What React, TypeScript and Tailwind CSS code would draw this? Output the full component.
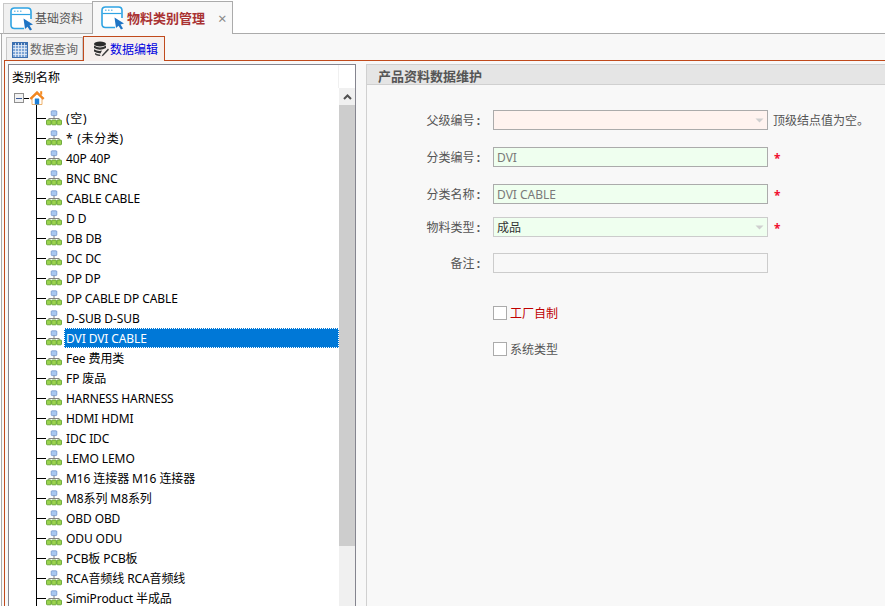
import React from "react";

const FONT = "font-['Noto_Sans','Noto_Sans_CJK_SC',sans-serif]";

function WindowIcon() {
  return (
    <svg width="24" height="24" viewBox="0 0 24 24" className="shrink-0">
      <path d="M14 21.5H4.5Q1 21.5 1 18V4.5Q1 1 4.5 1H17.5Q21 1 21 4.5V12" fill="#fff" stroke="#2ea3e3" strokeWidth="1.6" />
      <path d="M1.5 7.5H20.5" stroke="#2ea3e3" strokeWidth="1.2" />
      <path d="M4 4.2H5.5M7 4.2H8.5M10 4.2H11.5" stroke="#7cc3ea" strokeWidth="1.4" />
      <path d="M13.5 11.5L23 17.5L19.5 18.5L22 22.5L20 23.5L17.5 19.8L15 22Z" fill="#1f74c4" />
    </svg>
  );
}

function GridIcon() {
  return (
    <svg width="16" height="16" viewBox="0 0 16 16" className="shrink-0">
      <rect x="0.5" y="0.5" width="15" height="15" fill="#7fa6d6" />
      <rect x="0.5" y="0.5" width="15" height="3" fill="#3b6fb0" />
      <path d="M0.5 3.5H15.5M0.5 6.5H15.5M0.5 9.5H15.5M0.5 12.5H15.5M3.5 0.5V15.5M6.5 0.5V15.5M9.5 0.5V15.5M12.5 0.5V15.5" stroke="#e8eff8" strokeWidth="0.8" />
      <rect x="0.5" y="0.5" width="15" height="15" fill="none" stroke="#3b6fb0" />
    </svg>
  );
}

function DbIcon() {
  return (
    <svg width="16" height="16" viewBox="0 0 16 16" className="shrink-0">
      <ellipse cx="7" cy="3" rx="6" ry="2.6" fill="#2b2b2b" />
      <path d="M1 4.6Q7 8.4 13 4.6V7Q7 10.6 1 7Z" fill="#333" />
      <path d="M1 8.2Q5 10.6 9 9.6L7.5 12.4Q3.5 12.4 1 10.6Z" fill="#333" />
      <path d="M2 12Q4.5 13.6 7 13.4L7.5 15Q3.5 15.4 2 13.6Z" fill="#444" />
      <path d="M15 7.5L9.5 13.5L8.5 15.5L10.5 14.6L16 8.8Z" fill="#3a3a3a" />
    </svg>
  );
}

function HomeIcon() {
  return (
    <svg width="16" height="16" viewBox="0 0 16 16" className="shrink-0">
      <path d="M3 8V14.5H13V8L8 3.5Z" fill="#fff" stroke="#e9a04a" strokeWidth="0.8" />
      <path d="M0.8 8.2L8 1.2L15.2 8.2L13.8 9.4L8 3.9L2.2 9.4Z" fill="#f58a1f" stroke="#e06c10" strokeWidth="0.5" />
      <rect x="11.2" y="1.2" width="2" height="3.5" fill="#f58a1f" />
      <rect x="5.8" y="8.5" width="4.4" height="6" rx="0.6" fill="#1d7fd6" />
    </svg>
  );
}

function NodeIcon() {
  return (
    <svg width="16" height="16" viewBox="0 0 16 16" className="shrink-0">
      <rect x="5.2" y="0.8" width="5.6" height="4.8" rx="0.8" fill="#a9c8f0" stroke="#6c8fc9" strokeWidth="0.7" />
      <path d="M8 5.6V9M2.8 10V8.5H13.2V10" fill="none" stroke="#777" strokeWidth="0.9" />
      <rect x="0.5" y="10" width="4.6" height="4.8" rx="0.8" fill="#9bd34f" stroke="#5a9a26" strokeWidth="0.8" />
      <rect x="5.7" y="10" width="4.6" height="4.8" rx="0.8" fill="#9bd34f" stroke="#5a9a26" strokeWidth="0.8" />
      <rect x="10.9" y="10" width="4.6" height="4.8" rx="0.8" fill="#9bd34f" stroke="#5a9a26" strokeWidth="0.8" />
    </svg>
  );
}

const ROWS = [
  "(空)",
  "* (未分类)",
  "40P 40P",
  "BNC BNC",
  "CABLE CABLE",
  "D D",
  "DB DB",
  "DC DC",
  "DP DP",
  "DP CABLE DP CABLE",
  "D-SUB D-SUB",
  "DVI DVI CABLE",
  "Fee 费用类",
  "FP 废品",
  "HARNESS HARNESS",
  "HDMI HDMI",
  "IDC IDC",
  "LEMO LEMO",
  "M16 连接器 M16 连接器",
  "M8系列 M8系列",
  "OBD OBD",
  "ODU ODU",
  "PCB板 PCB板",
  "RCA音频线 RCA音频线",
  "SimiProduct 半成品",
];

function TreeRow({ text }: { text: string }) {
  const selected = text === "DVI DVI CABLE";
  const wide = text.startsWith("(") || text.startsWith("*");
  return (
    <div className="flex h-5 items-center">
      <div className="h-px w-[9px] shrink-0 bg-black" />
      <NodeIcon />
      <div
        className={
          selected
            ? "ml-[2px] flex h-5 flex-1 items-center border border-dotted border-white bg-[#0078d7] pl-[1px] pt-px tracking-[-0.1px] text-white"
            : wide
              ? "ml-[2px] flex h-5 flex-1 items-center pl-[2px] pt-px tracking-[0.7px] text-black"
              : "ml-[2px] flex h-5 flex-1 items-center pl-[2px] pt-px tracking-[-0.1px] text-black"
        }
      >
        {text}
      </div>
    </div>
  );
}

function Arrow() {
  return (
    <svg width="9" height="5" viewBox="0 0 9 5" className="mr-[3px] shrink-0">
      <path d="M0.5 0.5H8.5L4.5 4.5Z" fill="#cfcfcf" />
    </svg>
  );
}

function FormRow({
  label,
  box,
  value,
  combo,
  star,
  note,
  mt,
}: {
  label: string;
  box: string;
  value?: string;
  combo?: boolean;
  star?: boolean;
  note?: string;
  mt: string;
}) {
  return (
    <div className={`flex h-5 items-center ${mt}`}>
      <div className="w-[113px] shrink-0 pt-[2px] text-right text-[#555]">
        {label}
        <span className="ml-[2px] font-bold">:</span>
      </div>
      <div className={`ml-[13px] flex h-5 w-[275px] shrink-0 items-center justify-between border pl-[3px] ${box}`}>
        <span className="pt-px">{value}</span>
        {combo && <Arrow />}
      </div>
      {star && <span className="ml-[6px] pt-[3px] font-bold leading-[12px] text-[#f01030]">*</span>}
      {note && <span className="ml-[5px] pt-[2px] text-[#555]">{note}</span>}
    </div>
  );
}

function Check({ label, color, mt }: { label: string; color: string; mt: string }) {
  return (
    <div className={`ml-[126px] flex h-[14px] items-center ${mt}`}>
      <div className="h-[14px] w-[14px] shrink-0 border border-[#ababab] bg-white" />
      <span className={`ml-[3px] pt-px ${color}`}>{label}</span>
    </div>
  );
}

export default function App() {
  return (
    <div className={`flex h-[606px] w-[885px] flex-col overflow-hidden bg-white text-[12px] leading-[16px] ${FONT}`}>
      {/* main tabs */}
      <div className="relative z-10 flex h-[34px] shrink-0 items-end border-b border-[#ababab] pl-[3px]">
        <div className="-mb-px flex h-[31px] w-[89px] items-center border border-r-0 border-[#c8c8c8] border-b-[#ababab] bg-[#f0f0f0] pl-[6px]">
          <WindowIcon />
          <span className="ml-px pt-px text-[#555]">基础资料</span>
        </div>
        <div className="-mb-px flex h-[33px] w-[141px] items-center border border-b-0 border-[#ababab] bg-[#f8f8f8] pl-[8px]">
          <WindowIcon />
          <span className="ml-[2px] text-[13px] font-bold text-[#a93232]">物料类别管理</span>
          <span className="ml-[13px] text-[15px] text-[#888]">×</span>
        </div>
      </div>

      {/* content */}
      <div className="ml-px flex min-h-0 flex-1 flex-col border-l border-[#ababab] bg-[#f8f8f8]">
        <div className="flex h-[26px] shrink-0 items-end pl-[4px]">
          <div className="-mb-px flex h-[24px] w-[77px] items-center border border-b-0 border-[#c8c8c8] bg-[#f0f0f0] pl-[5px]">
            <GridIcon />
            <span className="ml-[2px] pt-px text-[#666]">数据查询</span>
          </div>
          <div className="relative z-10 -mb-px flex h-[25px] w-[82px] items-center border border-b-0 border-[#c04a1c] bg-[#f6efec] pl-[9px]">
            <DbIcon />
            <span className="ml-px pt-px text-[#0000e0]">数据编辑</span>
          </div>
        </div>

        <div className="ml-[2px] flex min-h-0 flex-1 border-l border-t border-[#c04a1c] pl-[3px] pt-[3px]">
          {/* tree box */}
          <div className="flex h-[560px] w-[348px] shrink-0 border border-[#85858f] bg-white">
            <div className="min-w-0 flex-1 overflow-hidden">
              <div className="flex h-[23px] items-center border-r border-[#f0f0f0] pl-[3px] pt-[2px] text-black">类别名称</div>
              <div className="flex h-5 items-center pl-[5px]">
                <div className="flex h-[10px] w-[10px] shrink-0 items-center justify-center border border-[#8f8f8f] bg-[#f2f2f2]">
                  <div className="h-px w-[6px] bg-[#3a5a9a]" />
                </div>
                <div className="h-px w-[5px] shrink-0 bg-black" />
                <HomeIcon />
              </div>
              <div className="-mt-[3px] ml-[27px] border-l border-black pt-[3px]">
                {ROWS.map((r) => (
                  <TreeRow key={r} text={r} />
                ))}
              </div>
            </div>
            <div className="flex w-[16px] shrink-0 flex-col">
              <div className="h-[23px] shrink-0 bg-white" />
              <div className="flex h-[17px] shrink-0 items-center justify-center bg-[#f0f0f0]">
                <svg width="9" height="6" viewBox="0 0 9 6">
                  <path d="M1 5L4.5 1.5L8 5" fill="none" stroke="#505050" strokeWidth="2" />
                </svg>
              </div>
              <div className="h-[441px] shrink-0 bg-[#cdcdcd]" />
              <div className="flex-1 bg-[#f0f0f0]" />
            </div>
          </div>

          {/* form panel */}
          <div className="ml-[10px] flex min-w-0 flex-1 flex-col border-l border-t border-[#d0d0d0] bg-[#f8f8f8]">
            <div className="flex h-[20px] shrink-0 items-center border-b border-[#d0d0d0] bg-[#e5e5e5] pl-[11px] pt-[2px] text-[13px] font-bold text-[#555]">
              产品资料数据维护
            </div>
            <FormRow mt="mt-[25px]" label="父级编号" box="border-[#ababab] bg-[#fff3ef]" combo note="顶级结点值为空。" />
            <FormRow mt="mt-[17px]" label="分类编号" box="border-[#ababab] bg-[#efffef] text-[#7a7a7a]" value="DVI" star />
            <FormRow mt="mt-[17px]" label="分类名称" box="border-[#ababab] bg-[#efffef] text-[#7a7a7a]" value="DVI CABLE" star />
            <FormRow mt="mt-[13px]" label="物料类型" box="border-[#cccccc] bg-[#efffef] text-[#333]" value="成品" combo star />
            <FormRow mt="mt-[16px]" label="备注" box="border-[#cccccc] bg-[#f8f8f8]" />
            <Check mt="mt-[33px]" label="工厂自制" color="text-[#c00000]" />
            <Check mt="mt-[22px]" label="系统类型" color="text-[#555]" />
          </div>
        </div>
      </div>
    </div>
  );
}
